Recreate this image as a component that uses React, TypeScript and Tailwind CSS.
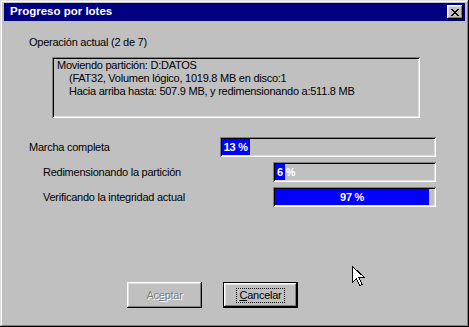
import React from 'react';

const raised =
  'shadow-[inset_-1px_-1px_#000000,inset_1px_1px_#ffffff,inset_-2px_-2px_#808080,inset_2px_2px_#dfdfdf]';
const sunken =
  'shadow-[inset_1px_1px_#808080,inset_-1px_-1px_#ffffff,inset_2px_2px_#000000,inset_-2px_-2px_#dfdfdf]';

function Bar({ pct, width, start }: { pct: number; width: string; start?: boolean }) {
  return (
    <div className={`${width} h-[20px] p-[2px] bg-[#c0c0c0] ${sunken}`}>
      <div className="relative h-full w-full">
        <div className="h-full bg-[#0000ff]" style={{ width: `${pct}%` }} />
        <div
          className={`absolute inset-y-0 left-0 flex items-center whitespace-nowrap text-[11px] font-bold text-white ${
            start ? 'pl-[2px]' : 'justify-center'
          }`}
          style={start ? undefined : { width: `${pct}%` }}
        >
          {pct} %
        </div>
      </div>
    </div>
  );
}

function Cursor() {
  return (
    <svg className="absolute left-[352px] top-[266px]" width="14" height="21" viewBox="0 0 14 21">
      <path
        d="M0.5 0.5 L0.5 16.5 L4.5 12.5 L7.5 19.5 L10 18.5 L7 11.5 L12.5 11.5 Z"
        fill="#ffffff"
        stroke="#000000"
        strokeWidth="1"
        shapeRendering="crispEdges"
      />
    </svg>
  );
}

export default function App() {
  return (
    <div
      className="relative w-[469px] h-[327px] bg-[#c0c0c0] text-black shadow-[inset_-1px_-1px_#000000,inset_1px_1px_#dfdfdf,inset_-2px_-2px_#808080,inset_2px_2px_#ffffff] px-[4px] pt-[3px] overflow-hidden"
      style={{ fontFamily: '"Liberation Sans", Arial, sans-serif' }}
    >
      {/* title bar */}
      <div className="h-[18px] bg-[#000080] flex items-center justify-between pl-[6px] pr-[2px]">
        <span className="text-[11.5px] font-bold text-white leading-none">Progreso por lotes</span>
        <div className={`w-[16px] h-[14px] bg-[#c0c0c0] flex items-center justify-center ${raised}`}>
          <svg width="8" height="7" viewBox="0 0 8 7" className="block">
            <rect x="0" y="0" width="2" height="1" fill="#000" />
            <rect x="6" y="0" width="2" height="1" fill="#000" />
            <rect x="1" y="1" width="2" height="1" fill="#000" />
            <rect x="5" y="1" width="2" height="1" fill="#000" />
            <rect x="2" y="2" width="4" height="1" fill="#000" />
            <rect x="3" y="3" width="2" height="1" fill="#000" />
            <rect x="2" y="4" width="4" height="1" fill="#000" />
            <rect x="1" y="5" width="2" height="1" fill="#000" />
            <rect x="5" y="5" width="2" height="1" fill="#000" />
            <rect x="0" y="6" width="2" height="1" fill="#000" />
            <rect x="6" y="6" width="2" height="1" fill="#000" />
          </svg>
        </div>
      </div>

      {/* body */}
      <div className="text-[11px] tracking-[-0.25px] leading-[13px]">
        <div className="mt-[15px] ml-[25px]">Operación actual (2 de 7)</div>

        <div className={`mt-[8px] ml-[48px] w-[368px] h-[61px] px-[5px] pt-[2px] ${sunken}`}>
          <div>Moviendo partición: D:DATOS</div>
          <div className="pl-[12px]">(FAT32, Volumen lógico, 1019.8 MB en disco:1</div>
          <div className="pl-[12px]">Hacia arriba hasta: 507.9 MB, y redimensionando a:511.8 MB</div>
        </div>

        <div className="mt-[19px] flex flex-col gap-[5px]">
          <div className="flex items-center ml-[25px]">
            <div className="w-[191px]">Marcha completa</div>
            <Bar pct={13} width="w-[216px]" />
          </div>
          <div className="flex items-center ml-[39px]">
            <div className="w-[230px]">Redimensionando la partición</div>
            <Bar pct={6} width="w-[163px]" start />
          </div>
          <div className="flex items-center ml-[39px]">
            <div className="w-[230px]">Verificando la integridad actual</div>
            <Bar pct={97} width="w-[163px]" />
          </div>
        </div>

        <div className="mt-[75px] ml-[123px] flex gap-[21px]">
          <div className={`w-[75px] h-[26px] flex items-center justify-center ${raised}`}>
            <span className="text-[#808080] [text-shadow:1px_1px_0_#ffffff]">
              Ac<span className="underline">e</span>ptar
            </span>
          </div>
          <div className="w-[75px] h-[26px] border border-black">
            <div className={`w-full h-full flex items-center justify-center ${raised}`}>
              <span className="px-[2px] outline outline-1 outline-dotted outline-black">
                <span className="underline">C</span>ancelar
              </span>
            </div>
          </div>
        </div>
      </div>

      <Cursor />
    </div>
  );
}
